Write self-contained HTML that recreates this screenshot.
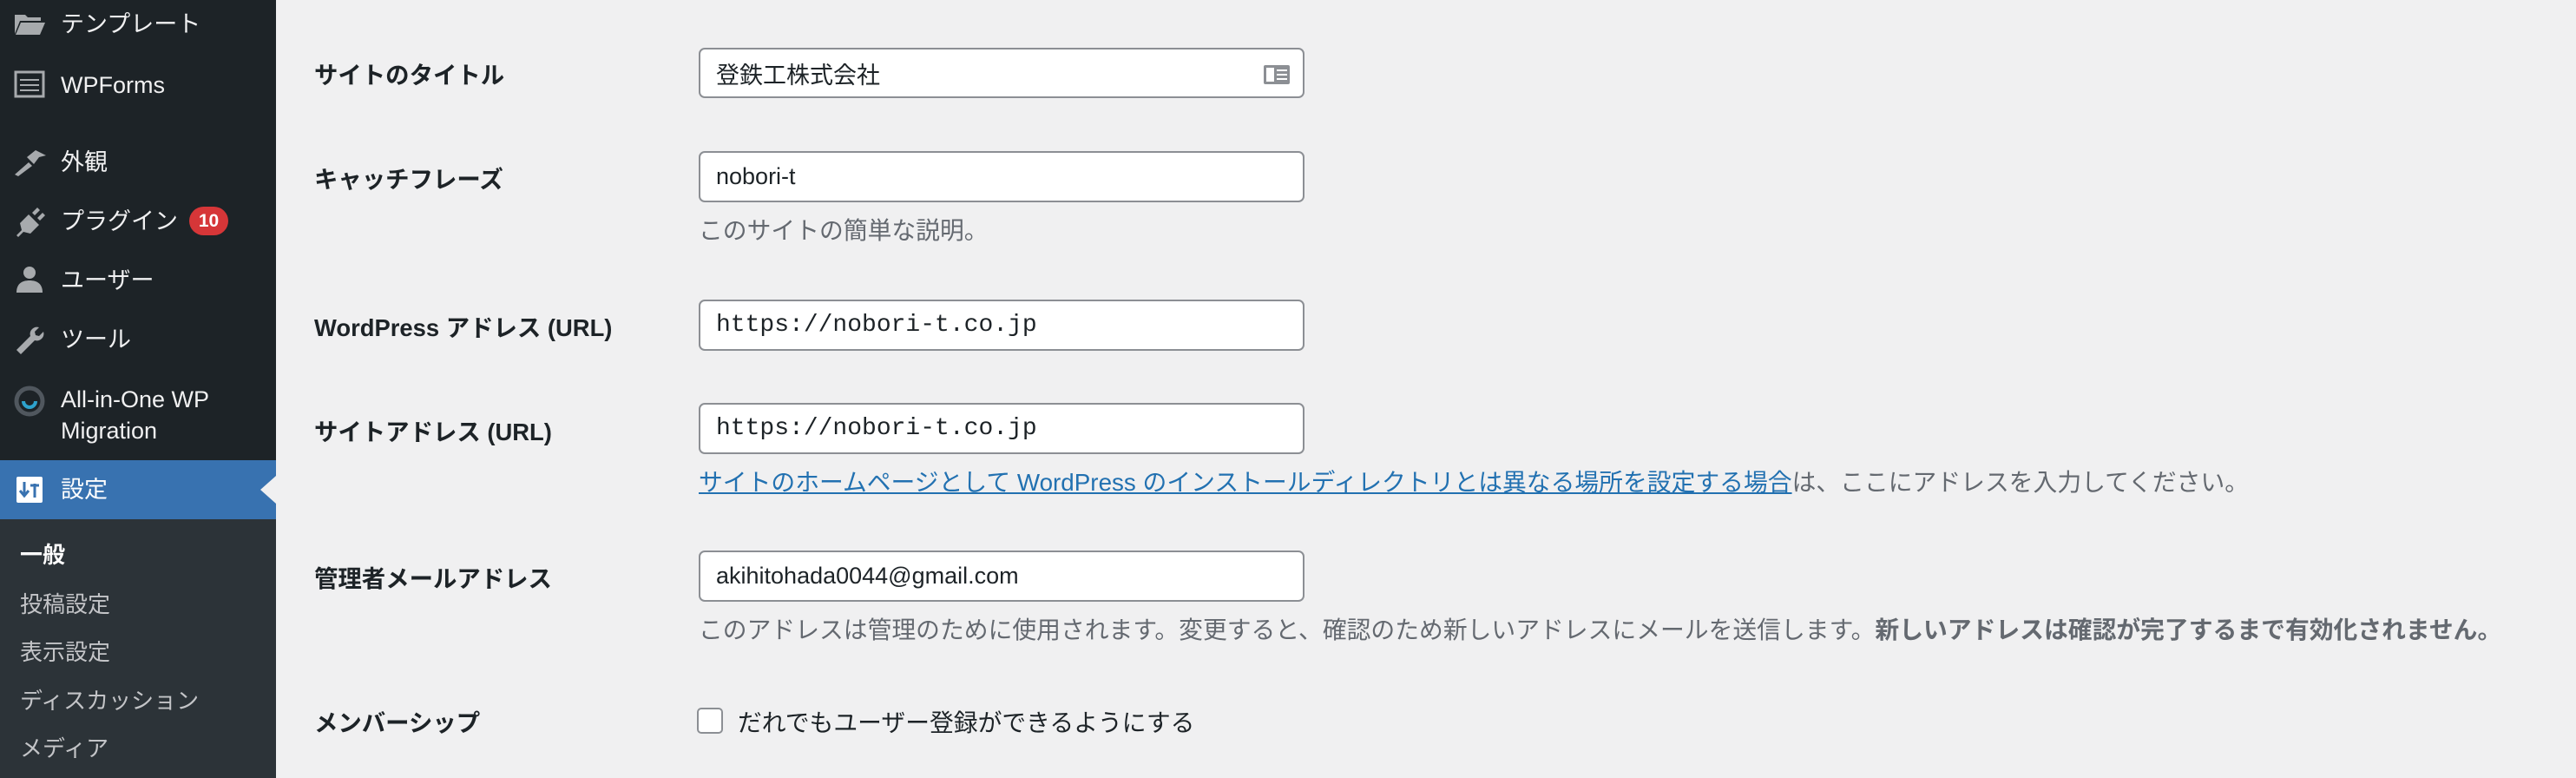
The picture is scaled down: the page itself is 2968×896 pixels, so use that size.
<!DOCTYPE html>
<html><head><meta charset="utf-8"><style>
*{margin:0;padding:0;box-sizing:border-box}
body{width:2968px;height:896px;background:#f0f0f1;position:relative;overflow:hidden;font-family:"Liberation Sans","Noto Sans CJK JP",sans-serif;color:#1d2327}
.sb{position:absolute;left:0;top:0;width:318px;height:896px;background:#1d2327}
.sub{position:absolute;left:0;top:598px;width:318px;height:298px;background:#2c3338}
.act{position:absolute;left:0;top:530px;width:318px;height:68px;background:#3872b0}
.arrow{position:absolute;left:300px;top:548px;width:0;height:0;border-top:16px solid transparent;border-bottom:16px solid transparent;border-right:18px solid #f0f0f1}
.mi{position:absolute;left:70px;font-size:27px;color:#f0f0f1;line-height:34px;transform:translateY(-50%)}
.si{position:absolute;left:23px;font-size:26px;color:#c3c4c7;line-height:34px;transform:translateY(-50%)}
.ic{position:absolute;left:15px;width:38px;height:38px;transform:translateY(-50%)}
.lb{position:absolute;left:362px;font-size:27.4px;font-weight:bold;transform:translateY(-50%);white-space:nowrap;margin-top:1px}
.in{position:absolute;left:805px;width:698px;background:#fff;border:2px solid #8c8f94;border-radius:7px;font-size:27px;padding-left:18px;display:flex;align-items:center}
.mono{font-family:"Liberation Mono","DejaVu Sans Mono",monospace;font-size:28px}
.ds{position:absolute;left:805px;font-size:27.8px;color:#646970;transform:translateY(-50%);white-space:nowrap;margin-top:1px}
</style></head><body>
<div class="sb"></div><div class="sub"></div><div class="act"></div><div class="arrow"></div>
<svg class="ic" style="top:28px" viewBox="0 0 38 38"><path d="M2 8h12l3 3h15v4H8L2 30z M9 17h28l-6 14H3z" fill="#a7aaad"/></svg>
<div class="mi" style="top:28px">テンプレート</div>
<svg class="ic" style="top:97px" viewBox="0 0 38 38"><rect x="3" y="5" width="32" height="28" fill="none" stroke="#a7aaad" stroke-width="3"/><path d="M8 14h22M8 20h22M8 26h22" stroke="#a7aaad" stroke-width="2"/></svg>
<div class="mi" style="top:98px">WPForms</div>
<svg class="ic" style="top:186px" viewBox="0 0 38 38"><path d="M2 34l16-14 4 4-16 12z M16 14l10-8 12 6-8 2-6 8z" fill="#a7aaad"/></svg>
<div class="mi" style="top:187px">外観</div>
<svg class="ic" style="top:254px" viewBox="0 0 38 38"><path d="M4 36l6-6-2-8 10-10 12 12-10 10-8-2-6 6z M22 10l6-6 3 3-6 6z M28 16l6-6 3 3-6 6z" fill="#a7aaad"/></svg>
<div class="mi" style="top:255px">プラグイン</div>
<div style="position:absolute;left:218px;top:238px;width:45px;height:33px;border-radius:17px;background:#d63638;color:#fff;font-size:21px;font-weight:bold;text-align:center;line-height:33px">10</div>
<svg class="ic" style="top:322px" viewBox="0 0 38 38"><circle cx="19" cy="11" r="7" fill="#a7aaad"/><path d="M4 34c0-10 6-14 15-14s15 4 15 14z" fill="#a7aaad"/></svg>
<div class="mi" style="top:323px">ユーザー</div>
<svg class="ic" style="top:390px" viewBox="0 0 38 38"><path d="M4 32l16-16a8 8 0 0 1 10-10l-5 5 1 4 4 1 5-5a8 8 0 0 1-10 10L9 37z" fill="#a7aaad"/></svg>
<div class="mi" style="top:391px">ツール</div>
<svg class="ic" style="top:462px" viewBox="0 0 38 38"><circle cx="19" cy="19" r="15" fill="none" stroke="#50575e" stroke-width="5"/><path d="M12 19a7 7 0 0 0 14 0" fill="none" stroke="#2ea2cc" stroke-width="4"/></svg>
<div class="mi" style="top:460px">All-in-One WP</div>
<div class="mi" style="top:496px">Migration</div>
<svg class="ic" style="top:564px" viewBox="0 0 38 38"><rect x="4" y="4" width="30" height="30" rx="2" fill="#fff"/><path d="M13 10v16M8 20l5 6 5-6M25 28V12M20 14h10" stroke="#3872b0" stroke-width="3" fill="none"/></svg>
<div class="mi" style="top:564px;color:#fff">設定</div>
<div class="si" style="top:639px;color:#fff;font-weight:bold">一般</div>
<div class="si" style="top:696px">投稿設定</div>
<div class="si" style="top:751px">表示設定</div>
<div class="si" style="top:807px">ディスカッション</div>
<div class="si" style="top:862px">メディア</div>

<div class="lb" style="top:83px">サイトのタイトル</div>
<div class="in" style="top:55px;height:58px">登鉄工株式会社
<svg style="position:absolute;right:14px;top:17px" width="32" height="24" viewBox="0 0 32 24"><rect x="1" y="1" width="30" height="22" rx="2" fill="#8c8f94"/><rect x="4" y="4" width="9" height="16" fill="#fff"/><path d="M16 7h12M16 12h12M16 17h12" stroke="#fff" stroke-width="2"/></svg></div>
<div class="lb" style="top:203px">キャッチフレーズ</div>
<div class="in" style="top:174px;height:59px">nobori-t</div>
<div class="ds" style="top:263px">このサイトの簡単な説明。</div>
<div class="lb" style="top:374px">WordPress アドレス (URL)</div>
<div class="in mono" style="top:345px;height:59px">https://nobori-t.co.jp</div>
<div class="lb" style="top:494px">サイトアドレス (URL)</div>
<div class="in mono" style="top:464px;height:59px">https://nobori-t.co.jp</div>
<div class="ds" style="top:553px"><span style="color:#2271b1;text-decoration:underline">サイトのホームページとして WordPress のインストールディレクトリとは異なる場所を設定する場合</span>は、ここにアドレスを入力してください。</div>
<div class="lb" style="top:663px">管理者メールアドレス</div>
<div class="in" style="top:634px;height:59px">akihitohada0044@gmail.com</div>
<div class="ds" style="top:723px">このアドレスは管理のために使用されます。変更すると、確認のため新しいアドレスにメールを送信します。<b>新しいアドレスは確認が完了するまで有効化されません。</b></div>
<div class="lb" style="top:829px">メンバーシップ</div>
<div style="position:absolute;left:803px;top:815px;width:30px;height:30px;border:2px solid #8c8f94;border-radius:5px;background:#fff"></div>
<div class="ds" style="left:850px;top:830px;color:#1d2327">だれでもユーザー登録ができるようにする</div>
</body></html>
